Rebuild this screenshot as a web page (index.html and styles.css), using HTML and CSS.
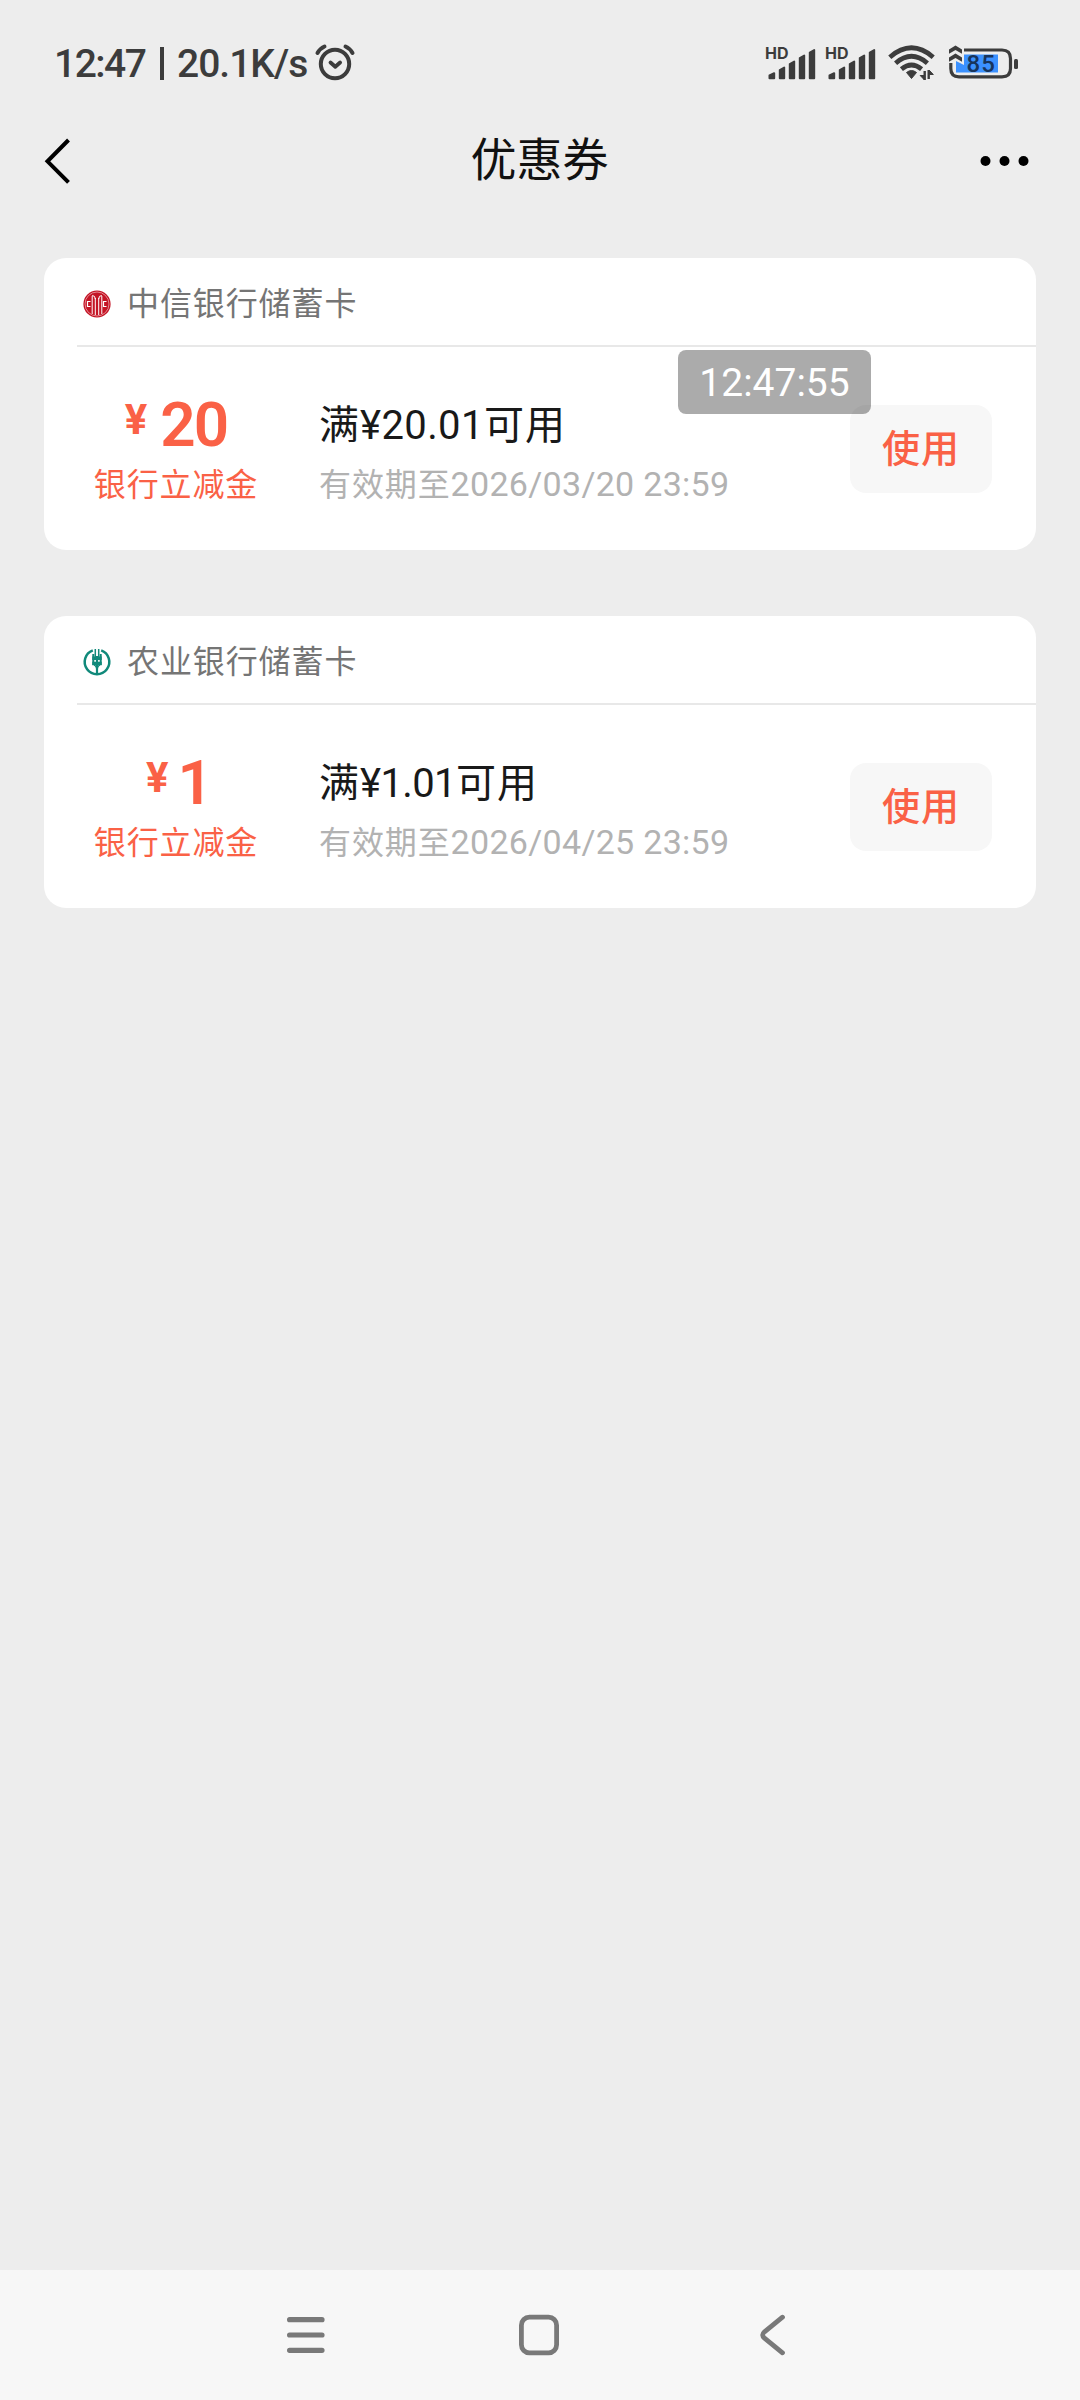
FILE: index.html
```html
<!DOCTYPE html>
<html lang="zh-CN">
<head>
<meta charset="UTF-8">
<title>优惠券</title>
<link rel="stylesheet" href="styles.css">
</head>
<body>
<div class="screen">
  <header class="status">
    <span class="status-time">12:47</span>
    <span class="status-sep"></span>
    <span class="status-speed">20.1K/s</span>
    <svg class="alarm" width="40" height="38" viewBox="0 0 40 38" fill="none" stroke="#3c3c3c" stroke-linecap="round">
      <circle cx="20" cy="21" r="14.2" stroke-width="4"/>
      <path d="M15.500 19.500l4.800 4.200 4.800-4.200" stroke-width="3.8" stroke-linejoin="round"/>
      <path d="M2.500 10Q5 5.500 9.500 3.500M30.500 3.500Q35 5.500 37.500 10" stroke-width="4"/>
    </svg>
    <span class="spacer"></span>
    <svg class="signal" width="51" height="36" viewBox="0 0 51 36">
      <text x="-1" y="14" class="hd">HD</text>
      <g fill="#3c3c3c" stroke="#3c3c3c" stroke-width="2" stroke-linejoin="round">
        <path d="M3.500 33.200V30.500L8.200 28.200V33.200ZM13.800 33.200V25L18.200 22.500V33.200ZM23.800 33.200V19L28.200 16.500V33.200ZM33.800 33.200V13L38.200 10.500V33.200ZM43.800 33.200V7.500L48.200 5V33.200Z"/>
      </g>
    </svg>
    <svg class="signal" width="51" height="36" viewBox="0 0 51 36">
      <text x="-1" y="14" class="hd">HD</text>
      <g fill="#3c3c3c" stroke="#3c3c3c" stroke-width="2" stroke-linejoin="round">
        <path d="M3.500 33.200V30.500L8.200 28.200V33.200ZM13.800 33.200V25L18.200 22.500V33.200ZM23.800 33.200V19L28.200 16.500V33.200ZM33.800 33.200V13L38.200 10.500V33.200ZM43.800 33.200V7.500L48.200 5V33.200Z"/>
      </g>
    </svg>
    <svg class="wifi" width="48" height="38" viewBox="0 0 48 38" fill="none" stroke="#3c3c3c" stroke-width="4.800">
      <path d="M1.800 13.200Q23.500 -5.500 45.200 13.200M7.600 19.200Q23.500 5.500 39.400 19.200M13.400 25.200Q23.500 17 33.600 25.200"/>
      <path d="M18.500 28.500Q23.500 24.500 28.500 28.500L23.500 34.500Z" fill="#3c3c3c" stroke="#3c3c3c" stroke-width="1"/>
      <path d="M36.700 27V36M40.700 26V35" stroke-width="2.400"/>
      <path d="M32.200 31.500H36V35.500ZM45.300 30.500H41.500V26.500Z" fill="#3c3c3c" stroke="#3c3c3c" stroke-width="1"/>
    </svg>
    <svg class="battery" width="70" height="36" viewBox="0 0 70 36">
      <path d="M15 9.500H49V27.500H7V16L15 20Z" fill="#3b91ff"/>
      <path d="M15 5H53Q61.500 5 61.500 13.500V23.500Q61.500 31.800 53 31.800H10Q1.800 31.800 1.800 23.500V18" fill="none" stroke="#3c3c3c" stroke-width="3.200"/>
      <path d="M0 4.500L6.500 0.500L13 4.500V8.800L6.500 5L0 8.800ZM0 12.500L6.500 8.500L13 12.500V16.800L6.500 13L0 16.800Z" fill="#3c3c3c"/>
      <rect x="65" y="14" width="4" height="10" rx="1.500" fill="#3c3c3c"/>
      <text x="17.500" y="27" class="charge">85</text>
    </svg>
  </header>

  <nav class="titlebar">
    <svg width="28" height="48" viewBox="0 0 28 48" fill="none" stroke="#000" stroke-width="4"><path d="M24.500 3L3.500 24.300L24.500 45.300"/></svg>
    <h1 class="title">优惠券</h1>
    <svg width="50" height="12" viewBox="0 0 50 12"><circle cx="5.500" cy="6" r="5"/><circle cx="24.500" cy="6" r="5"/><circle cx="43.500" cy="6" r="5"/></svg>
  </nav>

  <main class="coupons">
    <section class="card">
      <div class="card-head">
        <svg width="28" height="28" viewBox="0 0 28 28">
          <circle cx="14" cy="14" r="13.600" fill="#c41425"/>
          <circle cx="14" cy="14" r="12" fill="none" stroke="#f0b8bc" stroke-width=".7"/>
          <path d="M9.200 6V24M18.800 6V24M12.300 8V25M15.700 8V25M9.200 5.500Q12.300 5.500 12.300 9M18.800 5.500Q15.700 5.500 15.700 9" fill="none" stroke="#fff" stroke-width="1"/>
          <path d="M7.500 11.500H4.500V16.500H7.500M23.500 11.500H20.500V16.500H23.500" fill="none" stroke="#fff" stroke-width="1.200"/>
        </svg>
        <span class="bank">中信银行储蓄卡</span>
      </div>
      <div class="card-body">
        <div class="value">
          <div class="amount"><span class="yen">¥</span><span class="num">20</span></div>
          <div class="kind">银行立减金</div>
        </div>
        <div class="info">
          <div class="rule">满<span class="rule-num">¥20.01</span>可用</div>
          <div class="expiry">有效期至<span class="date">2026/03/20 23:59</span></div>
        </div>
        <button class="use">使用</button>
      </div>
    </section>

    <section class="card">
      <div class="card-head">
        <svg width="28" height="28" viewBox="0 0 28 28" fill="none" stroke="#10897a">
          <path d="M9.800 2.400A12.300 12.300 0 1 0 18.200 2.400" stroke-width="2.500"/>
          <path d="M14 8V26" stroke-width="2.200"/>
          <path d="M12.300 1V9M15.700 1V9" stroke-width="1.500"/>
          <path d="M10.300 6V17M17.700 6V17" stroke-width="2"/>
          <path d="M9.300 10.300H18.700M9.300 15.500H18.700" stroke-width="3.400"/>
          <path d="M11 17Q13.800 18 13.800 23M17 17Q14.200 18 14.200 23" stroke-width="1.300"/>
        </svg>
        <span class="bank">农业银行储蓄卡</span>
      </div>
      <div class="card-body">
        <div class="value">
          <div class="amount"><span class="yen">¥</span><span class="num num-narrow">1</span></div>
          <div class="kind">银行立减金</div>
        </div>
        <div class="info">
          <div class="rule">满<span class="rule-num rule-num-tight">¥1.01</span>可用</div>
          <div class="expiry">有效期至<span class="date">2026/04/25 23:59</span></div>
        </div>
        <button class="use">使用</button>
      </div>
    </section>
  </main>

  <footer class="navbar">
    <svg width="40" height="42" viewBox="0 0 40 42" stroke="#797979" stroke-width="5.200" stroke-linecap="round"><path d="M3.600 5.700H36M3.600 21H36M3.600 36.300H36"/></svg>
    <svg class="home" width="42" height="42" viewBox="0 0 42 42" fill="none" stroke="#797979" stroke-width="4.800"><rect x="3.400" y="3.200" width="35.200" height="35.600" rx="8"/></svg>
    <svg width="28" height="42" viewBox="0 0 28 42" fill="none" stroke="#797979" stroke-width="4.800" stroke-linecap="round"><path d="M22.500 3.200L4.500 17.800Q.8 21 4.500 24.200L22.500 38.800"/></svg>
  </footer>

  <div class="clock">12:47:55</div>
</div>
</body>
</html>
```
FILE: styles.css
```css
* { box-sizing: border-box; }

body {
  margin: 0;
  background: #ededed;
  font-family: Roboto, "Noto Sans CJK SC", sans-serif;
}

svg { display: block; flex: none; overflow: visible; }

.screen {
  position: relative;
  display: flex;
  flex-direction: column;
  width: 1080px;
  height: 2400px;
}

.status {
  display: flex;
  align-items: center;
  height: 126px;
  padding: 0 61px 0 54px;
  color: #3c3c3c;
  font-size: 39px;
  font-weight: 500;
  line-height: 48px;
  white-space: nowrap;
}
.status-time { width: 94px; padding-top: 2px; letter-spacing: -1.500px; }
.status-sep { width: 4px; height: 33px; margin: 0 13px 0 12px; background: #3c3c3c; }
.status-speed { width: 138px; padding-top: 2px; letter-spacing: -1px; }
.alarm { margin-top: -3px; }
.spacer { flex: 1; }
.signal { margin-right: 9px; }
.wifi { margin: 0 13px 0 2px; }
.hd { font: bold 16px Inter, sans-serif; fill: #3c3c3c; }
.charge { font: 500 24px Roboto, sans-serif; letter-spacing: 1px; fill: #17345c; }

.titlebar {
  display: flex;
  align-items: center;
  justify-content: space-between;
  height: 70px;
  padding: 0 50px 0 44px;
}
.title { margin: -2px -27px 0 0; font-size: 46px; font-weight: 400; line-height: 60px; color: #111; }

.coupons {
  flex: 1;
  display: flex;
  flex-direction: column;
  gap: 66px;
  padding: 62px 44px 0;
}
.card { height: 292px; border-radius: 22px; background: #fff; }
.card-head {
  display: flex;
  align-items: center;
  gap: 16px;
  height: 89px;
  margin-left: 33px;
  padding: 4px 0 0 6px;
  border-bottom: 2px solid #e8e8e8;
}
.bank { font-size: 32px; letter-spacing: 0.900px; line-height: 40px; color: #757575; }
.card-body { display: flex; height: 203px; padding: 0 44px 0 33px; }
.value { width: 198px; padding-top: 44px; color: #fa6146; text-align: center; }
.amount { display: flex; justify-content: center; gap: 13px; height: 72px; line-height: 68px; }
.yen { font-size: 42px; font-weight: 700; line-height: 58px; }
.num { font-size: 62px; font-weight: 600; letter-spacing: -2px; }
.num-narrow { margin: 0 -5px 0 -4px; }
.kind { font-size: 32px; letter-spacing: 0.900px; line-height: 44px; }
.info { flex: 1; padding: 53px 0 0 44px; white-space: nowrap; }
.rule { font-size: 40px; letter-spacing: 1px; line-height: 52px; color: #191919; }
.rule-num { letter-spacing: 0.400px; }
.rule-num-tight { letter-spacing: -0.600px; }
.expiry { margin-top: 10px; font-size: 32px; letter-spacing: 0.900px; line-height: 44px; color: #b2b2b2; }
.date { font-size: 34px; letter-spacing: 0.300px; }
.use {
  width: 142px;
  height: 88px;
  margin-top: 58px;
  padding: 0 0 6px;
  border: 0;
  border-radius: 16px;
  background: #f7f7f7;
  color: #fa6146;
  font: 500 38px/82px "Noto Sans CJK SC", sans-serif;
  letter-spacing: 1px;
}

.navbar {
  display: flex;
  align-items: center;
  justify-content: space-between;
  height: 130px;
  padding: 0 292px 0 286px;
  background: #f7f7f7;
}
.home { margin-left: -8px; }

.clock {
  position: absolute;
  left: 678px;
  top: 350px;
  width: 193px;
  height: 64px;
  border-radius: 8px;
  background: rgba(0, 0, 0, 0.330);
  color: #fff;
  font-size: 39px;
  line-height: 67px;
  text-align: center;
}
```
